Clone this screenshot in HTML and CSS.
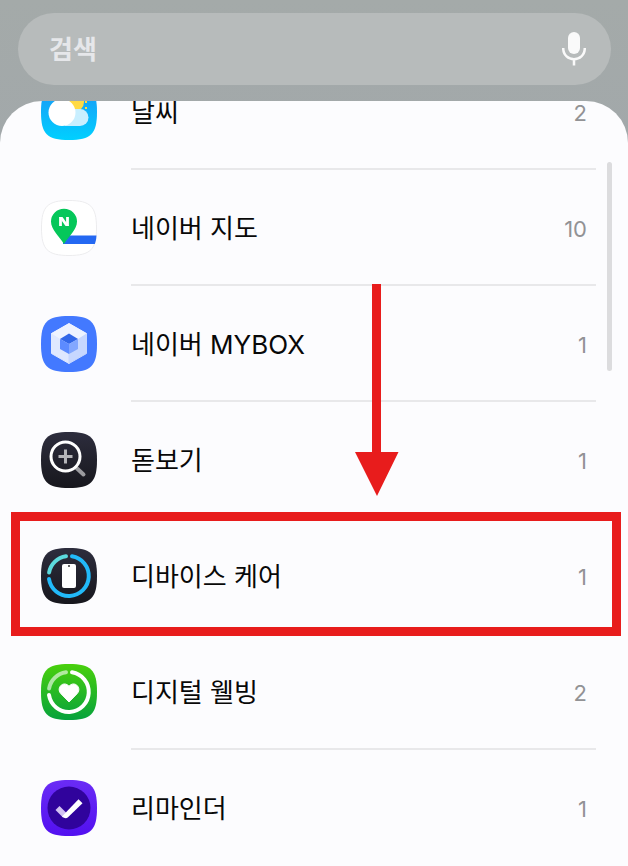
FILE: index.html
```html
<!DOCTYPE html>
<html lang="ko">
<head>
    <meta charset="UTF-8">
    <meta name="viewport" content="width=device-width, initial-scale=1.0">
    <title>검색</title>
    <link rel="stylesheet" href="styles.css">
</head>
<body>
    <header>
        <form class="search">
            <input type="text" placeholder="검색" aria-label="검색">
            <button type="button" aria-label="음성 검색">
                <svg width="24" height="34" viewBox="0 0 24 34">
                    <rect x="6" y="0" width="12" height="22" rx="6" fill="#fafafa"/>
                    <path d="M1.2 16C1.2 31 22.800 31 22.800 16M12 27V33.500" fill="none" stroke="#fafafa" stroke-width="2.500"/>
                </svg>
            </button>
        </form>
    </header>

    <main class="sheet">
        <ul class="app-list">
            <li>
                <a href="#">
                    <svg class="icon" viewBox="0 0 56 56">
                        <defs>
                            <linearGradient id="sky" x2="0" y2="1"><stop stop-color="#1d94f5"/><stop offset="1" stop-color="#00d0ff"/></linearGradient>
                        </defs>
                        <path d="M28 0C50 0 56 6 56 28S50 56 28 56 0 50 0 28 6 0 28 0Z" fill="url(#sky)"/>
                        <circle cx="33" cy="18" r="10" fill="#ffda45"/>
                        <path d="M44 18h2M44 24h2" stroke="#ffda45" stroke-width="2"/>
                        <path d="M27 25h12a8.500 8.500 0 0 1 0 17H24z" fill="#c9efff"/>
                        <circle cx="21" cy="28.500" r="13.500" fill="#fff"/>
                    </svg>
                    <span class="row-body">
                        <span class="name">날씨</span>
                        <span class="count">2</span>
                    </span>
                </a>
            </li>
            <li>
                <a href="#">
                    <svg class="icon" viewBox="0 0 56 56">
                        <path d="M28 .5C49.500 .5 55.500 6.500 55.500 28S49.500 55.500 28 55.500 .5 49.500 .5 28 6.500 .5 28 .5Z" fill="#fff" stroke="#ececee"/>
                        <path d="M22 35.500H55.500C55.200 39 54.800 41.500 53.800 44H22z" fill="#2468f2"/>
                        <path d="M23 44C18 36 10 29.500 10 21.500a13 12.800 0 0 1 26 0C36 29.500 28 36 23 44Z" fill="#05c75a"/>
                        <path d="M19.500 17v9M26.500 17v9" stroke="#fff" stroke-width="2.800"/>
                        <path d="M18.100 17H21.500L27.900 26H24.500z" fill="#fff"/>
                    </svg>
                    <span class="row-body">
                        <span class="name">네이버 지도</span>
                        <span class="count">10</span>
                    </span>
                </a>
            </li>
            <li>
                <a href="#">
                    <svg class="icon" viewBox="0 0 56 56">
                        <path d="M28 0C50 0 56 6 56 28S50 56 28 56 0 50 0 28 6 0 28 0Z" fill="#4379ff"/>
                        <path d="M28 7.500L45.500 17.500 28 28 10.500 17.500z" fill="#eef3ff" stroke="#eef3ff" stroke-linejoin="round"/>
                        <path d="M10.500 17.500L28 28V47.500L10.500 37.500z" fill="#dfe8ff" stroke="#dfe8ff" stroke-linejoin="round"/>
                        <path d="M45.500 17.500L28 28V47.500L45.500 37.500z" fill="#c7d7ff" stroke="#c7d7ff" stroke-linejoin="round"/>
                        <path d="M10.500 17.500L28 7.500 45.500 17.500 37 23 28 18 19 23z" fill="#eef3ff"/>
                        <path d="M28 17.500L37 23 28 28 19 23z" fill="#3267e8"/>
                        <path d="M19 23L28 28V38L19 33z" fill="#5c8bff"/>
                        <path d="M37 23L28 28V38L37 33z" fill="#83a7ff"/>
                    </svg>
                    <span class="row-body">
                        <span class="name">네이버 MYBOX</span>
                        <span class="count">1</span>
                    </span>
                </a>
            </li>
            <li>
                <a href="#">
                    <svg class="icon" viewBox="0 0 56 56">
                        <defs>
                            <linearGradient id="night" x2="0" y2="1"><stop stop-color="#2d2d3d"/><stop offset="1" stop-color="#17171d"/></linearGradient>
                        </defs>
                        <path d="M28 0C50 0 56 6 56 28S50 56 28 56 0 50 0 28 6 0 28 0Z" fill="url(#night)"/>
                        <path d="M35 35.500L42.500 42.500" stroke="#9b9b9f" stroke-width="4" stroke-linecap="round"/>
                        <circle cx="24.500" cy="24.500" r="14.500" fill="none" stroke="#fff" stroke-width="3"/>
                        <path d="M24.500 17.500v14M17.500 24.500h14" stroke="#b4b4b8" stroke-width="3"/>
                    </svg>
                    <span class="row-body">
                        <span class="name">돋보기</span>
                        <span class="count">1</span>
                    </span>
                </a>
            </li>
            <li class="marked">
                <a href="#">
                    <svg class="icon" viewBox="0 0 56 56">
                        <path d="M28 0C50 0 56 6 56 28S50 56 28 56 0 50 0 28 6 0 28 0Z" fill="url(#night)"/>
                        <g fill="none" stroke-width="4" stroke-linecap="round">
                            <path d="M8.100 24.500A20 20 0 0 1 25 8.300" stroke="#5cdadd"/>
                            <path d="M31 8.200A20 20 0 1 1 8 31" stroke="#22baf9"/>
                        </g>
                        <rect x="21" y="16" width="14" height="24" rx="2" fill="#fff"/>
                        <circle cx="28" cy="18" r="1" fill="#333"/>
                    </svg>
                    <span class="row-body">
                        <span class="name">디바이스 케어</span>
                        <span class="count">1</span>
                    </span>
                </a>
            </li>
            <li>
                <a href="#">
                    <svg class="icon" viewBox="0 0 56 56">
                        <defs>
                            <linearGradient id="leaf" x2="0" y2="1"><stop stop-color="#49d00c"/><stop offset="1" stop-color="#06a23c"/></linearGradient>
                        </defs>
                        <path d="M28 0C50 0 56 6 56 28S50 56 28 56 0 50 0 28 6 0 28 0Z" fill="url(#leaf)"/>
                        <g fill="none" stroke="#fff" stroke-width="4" stroke-linecap="round">
                            <path d="M8.100 24.500A20 20 0 0 1 25 8.300" stroke-opacity=".6"/>
                            <path d="M31 8.200A20 20 0 1 1 8 31"/>
                        </g>
                        <path d="M28 38L20 29.800C14.500 24 22.500 16 28 22.200 33.500 16 41.500 24 36 29.800Z" fill="#fff" stroke="#fff" stroke-linejoin="round"/>
                    </svg>
                    <span class="row-body">
                        <span class="name">디지털 웰빙</span>
                        <span class="count">2</span>
                    </span>
                </a>
            </li>
            <li>
                <a href="#">
                    <svg class="icon" viewBox="0 0 56 56">
                        <defs>
                            <linearGradient id="violet" x2="0" y2="1"><stop stop-color="#6a2cf5"/><stop offset="1" stop-color="#5210f0"/></linearGradient>
                        </defs>
                        <path d="M28 0C50 0 56 6 56 28S50 56 28 56 0 50 0 28 6 0 28 0Z" fill="url(#violet)"/>
                        <circle cx="28" cy="28" r="21.500" fill="#30039c"/>
                        <path d="M14.500 30L18.500 26 26 33.500 22 37.500z" fill="#d2c2f2"/>
                        <path d="M21 36.500L37.500 19.200 41.500 23.300 27 37.200Q24.500 39.500 21 36.500Z" fill="#fff"/>
                    </svg>
                    <span class="row-body">
                        <span class="name">리마인더</span>
                        <span class="count">1</span>
                    </span>
                </a>
            </li>
        </ul>

        <div class="scrollbar"></div>
        <svg class="arrow" width="44" height="212" viewBox="0 0 44 212">
            <path d="M17 0h9v168h17.500L22 212 0 168h17z" fill="#e81c1c"/>
        </svg>
    </main>
</body>
</html>
```
FILE: styles.css
```css
* {
    box-sizing: border-box;
}

body {
    margin: 0;
    font-family: Inter, "Noto Sans CJK KR", sans-serif;
    font-size: 26px;
    color: #080808;
    background: linear-gradient(#a4aaa9, #a2a8aa 144px);
}

/* 검색창 */
header {
    padding: 13px 17px 16px 18px;
}

.search {
    display: flex;
    align-items: center;
    height: 72px;
    padding: 0 25px 0 31px;
    border-radius: 36px;
    background-color: #b7bbbb;
}

.search input {
    flex: 1;
    min-width: 0;
    padding: 0;
    border: none;
    outline: none;
    background: none;
    font: inherit;
    font-weight: 700;
    color: #e6e7ea;
}

.search input::placeholder {
    color: #e6e7ea;
    opacity: 1;
}

.search button {
    display: flex;
    padding: 0;
    border: none;
    background: none;
    cursor: pointer;
}

/* 앱 목록 */
.sheet {
    position: relative;
    overflow: hidden;
    border-radius: 42px 42px 0 0;
    background-color: #fcfcfe;
}

/* 첫 줄은 스크롤되어 일부만 보임 */
.app-list {
    list-style: none;
    margin: -47px 0 0;
    padding: 0;
}

.app-list li {
    position: relative;
}

.app-list a {
    display: flex;
    align-items: center;
    gap: 34px;
    height: 116px;
    padding: 0 32px 0 41px;
    color: inherit;
    text-decoration: none;
}

.icon {
    flex: none;
    width: 56px;
    height: 56px;
}

.row-body {
    flex: 1;
    display: flex;
    align-items: center;
    justify-content: space-between;
    height: 100%;
    padding: 4px 9px 0 0;
    border-bottom: 2px solid #e8e8ea;
}

.app-list li:last-child .row-body {
    border-bottom-color: transparent;
}

.name {
    line-height: 36px;
}

.count {
    font-size: 22px;
    line-height: 28px;
    color: #929295;
}

.marked::after {
    content: "";
    position: absolute;
    inset: -6px 7px -2px 11px;
    border: 9px solid #e81c1c;
    pointer-events: none;
}

.scrollbar {
    position: absolute;
    top: 61px;
    right: 16px;
    width: 5px;
    height: 209px;
    border-radius: 3px;
    background-color: #dcdcde;
}

.arrow {
    position: absolute;
    top: 183px;
    left: 355px;
}
```
